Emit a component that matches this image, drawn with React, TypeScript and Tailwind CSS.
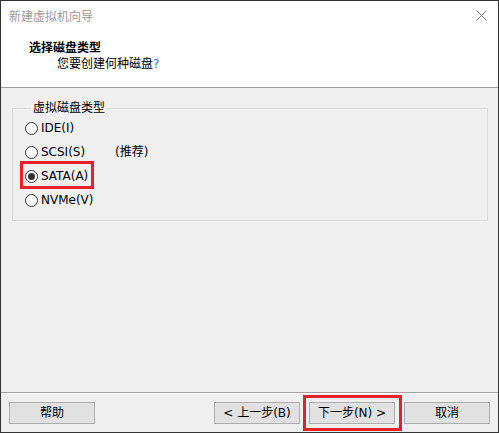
import React from "react";

function Radio({ checked }: { checked?: boolean }) {
  return (
    <span className="flex h-[13px] w-[13px] shrink-0 items-center justify-center rounded-full border border-[#333333] bg-white">
      {checked && <span className="h-[7px] w-[7px] rounded-full bg-[#333333]" />}
    </span>
  );
}

function Btn({ children }: { children: React.ReactNode }) {
  return (
    <div className="flex h-[22px] w-[86px] items-center justify-center border border-[#adadad] bg-[#e1e1e1] text-[12px] text-black">
      {children}
    </div>
  );
}

export default function App() {
  return (
    <div
      className="flex h-[433px] w-[499px] flex-col border border-[#333333] bg-[#f0f0f0] text-[12px] text-black"
      style={{ fontFamily: '"DejaVu Sans", "Noto Sans CJK SC", sans-serif' }}
    >
      {/* title bar */}
      <div className="flex h-[29px] items-center justify-between bg-white pl-[8px] pr-[10px]">
        <span className="text-[12px] text-[#9a9a9a]" style={{ fontFamily: '"Noto Sans CJK SC", sans-serif' }}>
          新建虚拟机向导
        </span>
        <svg width="11" height="11" viewBox="0 0 11 11" className="mr-[1px]">
          <path d="M0.5 0.5 L10.5 10.5 M10.5 0.5 L0.5 10.5" stroke="#7a7a7a" strokeWidth="1" />
        </svg>
      </div>
      {/* header */}
      <div className="flex h-[58px] flex-col border-b border-[#a0a0a0] bg-white pt-[10px]">
        <div className="pl-[28px] text-[12px] font-bold leading-[16px]">选择磁盘类型</div>
        <div className="pl-[56px] text-[12px] leading-[16px]">
          您要创建何种磁盘<span className="text-[#2a6fd6]">?</span>
        </div>
      </div>
      {/* body */}
      <div className="flex-1 pl-[11px] pr-[10px] pt-[12px]">
        <fieldset className="w-[476px] border border-[#dcdcdc] px-[12px] pb-[8px]">
          <legend className="ml-[6px] px-[2px] text-[12px] leading-[16px]">虚拟磁盘类型</legend>
          <div className="flex h-[24px] items-center gap-[3px]">
            <Radio />
            <span>IDE(I)</span>
          </div>
          <div className="flex h-[24px] items-center gap-[3px]">
            <Radio />
            <span className="w-[71px]">SCSI(S)</span>
            <span>(推荐)</span>
          </div>
          <div className="relative flex h-[24px] items-center gap-[3px]">
            <Radio checked />
            <span>SATA(A)</span>
            <div className="absolute left-[-5px] top-[-3px] h-[28px] w-[74px] border-[3px] border-[#e8202a]" />
          </div>
          <div className="flex h-[24px] items-center gap-[3px]">
            <Radio />
            <span>NVMe(V)</span>
          </div>
        </fieldset>
      </div>
      {/* separator */}
      <div className="h-[1px] bg-[#a0a0a0]" />
      <div className="h-[1px] bg-white" />
      {/* footer */}
      <div className="flex h-[38px] items-start px-[8px] pt-[8px]">
        <Btn>帮助</Btn>
        <div className="flex-1" />
        <div className="flex gap-[9px]">
          <Btn>&lt; 上一步(B)</Btn>
          <div className="relative">
            <Btn>下一步(N) &gt;</Btn>
            <div className="absolute left-[-6px] top-[-7px] h-[36px] w-[99px] border-[3px] border-[#e8202a]" />
          </div>
          <Btn>取消</Btn>
        </div>
      </div>
    </div>
  );
}
